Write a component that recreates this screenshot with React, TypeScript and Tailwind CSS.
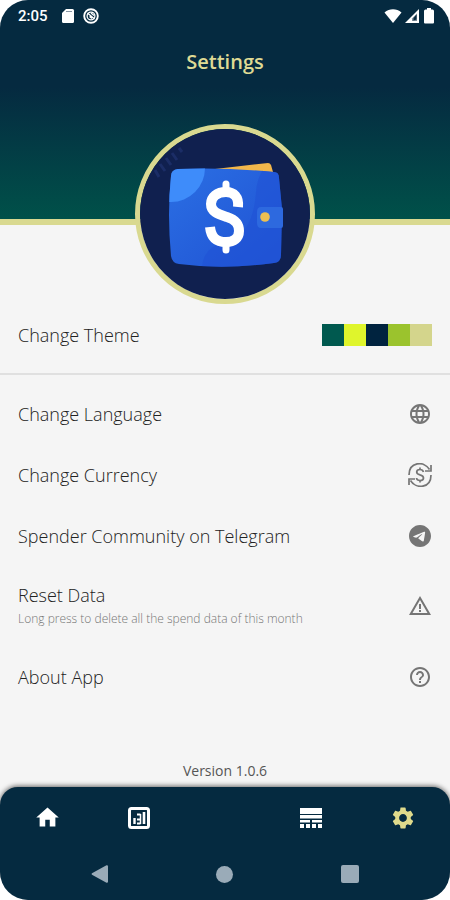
import type { ReactNode } from 'react';
import { MdHelpOutline, MdHome, MdLanguage, MdSettings, MdWarningAmber } from 'react-icons/md';

function StatusBar() {
  return (
    <div className="flex h-8 items-center justify-between pl-[18px] pr-[14px] text-white">
      <div className="flex items-center">
        <span className="w-[43px] font-['Roboto',sans-serif] text-[15px] font-medium leading-5">2:05</span>
        <svg viewBox="0 0 14 16" className="h-4 w-[14px]" fill="currentColor" aria-hidden="true">
          <path d="M5 1h6.500a1.500 1.500 0 0 1 1.500 1.500v11a1.500 1.500 0 0 1-1.500 1.500h-9A1.500 1.500 0 0 1 1 13.500V5z" />
          <path d="M5 3.500h6" stroke="#8795a3" strokeWidth="1.200" />
        </svg>
        <svg viewBox="0 0 16 16" className="ml-2 size-4" fill="none" stroke="currentColor" aria-hidden="true">
          <circle cx="8" cy="8" r="6.800" strokeWidth="1.900" />
          <circle cx="8" cy="8" r="3.900" strokeWidth="1.300" />
          <path d="M4.500 5l7 6M6.500 8.500l2.500 2M8 5l3 2.500" strokeWidth="1.400" />
        </svg>
      </div>
      <div className="flex items-center gap-[2px]">
        <svg viewBox="0 0 18 16" className="h-4 w-[18px]" fill="currentColor" aria-hidden="true">
          <path d="M9 15L.500 4.500C3 2.300 6 1.300 9 1.300s6 1 8.500 3.200z" />
        </svg>
        <svg viewBox="0 0 16 16" className="size-4" aria-hidden="true">
          <path d="M15 1v14H1z" fill="#fff" />
          <path d="M13 5.500v7.500H8V10.500z" fill="#7e8c99" />
          <path d="M12.500 6.500v5l-3 1v-2.500z" fill="#052a40" />
        </svg>
        <svg viewBox="0 0 14 16" className="h-4 w-[14px]" fill="currentColor" aria-hidden="true">
          <path d="M5 0h4v1.500h1.500A1.500 1.500 0 0 1 12 3v11.500a1 1 0 0 1-1 1H3a1 1 0 0 1-1-1V3a1.500 1.500 0 0 1 1.500-1.500H5z" />
        </svg>
      </div>
    </div>
  );
}

function WalletLogo() {
  return (
    <svg viewBox="0 0 170 170" className="size-full" role="img" aria-label="Spender wallet">
      <defs>
        <linearGradient id="wallet" x1="0" y1="0" x2="1" y2="1">
          <stop offset="0" stopColor="#2b70e4" />
          <stop offset="1" stopColor="#1f50d2" />
        </linearGradient>
        <clipPath id="body">
          <path d="M37 39Q83 37 133 42Q138 42 138 48L141 79L140 125Q140 132 133 133Q83 140 38 134Q31 133 30 126Q26 84 30 46Q30 40 37 39Z" />
        </clipPath>
      </defs>
      <rect width="170" height="170" fill="#10204f" />
      <g transform="translate(1 1)">
        <path d="M14 40l4 7M19 34l5 7M25 28l5 7M31 23l5 7M38 18l3 4" stroke="#1b2d66" strokeWidth="3" />
        <path d="M74 39L127 33Q129 33 130 35L132 42H74Z" fill="#f1b64b" />
        <g clipPath="url(#body)">
          <rect x="25" y="35" width="120" height="105" fill="url(#wallet)" />
          <path d="M123 38Q116 48 115 62Q113 92 99 105Q95 111 86 112Q61 116 61 140H145V38Z" fill="#2153d5" opacity="0.650" />
          <circle cx="30" cy="38" r="34" fill="#3e8cfa" />
        </g>
        <path d="M120 77h20q2 0 2 2v17q0 2-2 2H120q-4 0-4-5V82q0-5 4-5z" fill="#2d69df" />
        <circle cx="124" cy="87" r="4.800" fill="#edc052" />
        <path
          d="M97 80C98 70 93 65 85 65C76 65 70 70 70 77C70 85 77 87 86 90C95 93 98 97 98 104C98 111 93 115 85 115C75 115 70 110 69 100"
          transform="translate(0 -3)"
          fill="none"
          stroke="#fff"
          strokeWidth="10"
        />
        <path d="M85 57v-3M85 116v4" stroke="#fff" strokeWidth="7" strokeLinecap="round" />
      </g>
    </svg>
  );
}

function TelegramIcon() {
  return (
    <svg viewBox="0 0 24 24" className="size-6" fill="currentColor" aria-hidden="true">
      <path d="M12 1C5.920 1 1 5.920 1 12s4.920 11 11 11 11-4.920 11-11S18.080 1 12 1zm5.100 7.480c-.17 1.740-.88 5.960-1.240 7.910-.15.830-.46 1.100-.75 1.130-.64.060-1.120-.42-1.740-.83-.97-.64-1.520-1.030-2.450-1.650-1.090-.71-.39-1.110.24-1.750.17-.16 2.980-2.730 3.040-2.960.01-.03.010-.13-.06-.19s-.15-.04-.22-.02c-.10.020-1.640 1.050-4.640 3.070-.44.300-.84.450-1.190.44-.40-.01-1.140-.22-1.710-.41-.69-.22-1.230-.34-1.190-.73.020-.20.300-.40.810-.60 3.210-1.400 5.350-2.320 6.410-2.760 3.060-1.280 3.690-1.500 4.100-1.500.090 0 .300.020.430.130.110.090.140.210.150.300-.01.070.010.260.010.420z" />
    </svg>
  );
}

function CurrencyIcon() {
  return (
    <svg viewBox="0 0 24 24" className="size-6" fill="none" stroke="currentColor" aria-hidden="true">
      <path d="M1 12C1 -1.500 16 -2.500 21.500 6.500" strokeWidth="1.700" />
      <path d="M23 12C23 25.500 8 26.500 2.500 17.500" strokeWidth="1.700" />
      <path d="M23 2v6h-6M1 22v-6h6" strokeWidth="1.700" />
      <path
        d="M15.500 9C15 7.300 13.800 6.500 12 6.500C10 6.500 8.700 7.500 8.700 9C8.700 10.700 10 11.300 12 11.900C14.200 12.500 15.500 13.300 15.500 15C15.500 16.700 14 17.500 12 17.500C10 17.500 8.700 16.600 8.500 15M12 4.500v2M12 17.500v2"
        strokeWidth="1.700"
      />
    </svg>
  );
}

const swatches = ['bg-[#00594f]', 'bg-[#dff52c]', 'bg-[#00233f]', 'bg-[#9bc32d]', 'bg-[#d4d58c]'];

function SettingRow({ label, note, icon }: { label: string; note?: string; icon: ReactNode }) {
  return (
    <button
      type="button"
      className={`flex w-full items-center justify-between px-[18px] text-left ${note ? 'h-20' : 'h-[61px]'}`}
    >
      <span className="flex flex-col">
        <span className="text-lg font-light leading-7 text-[#222]">{label}</span>
        {note && <span className="pb-[2px] text-xs font-light leading-5 text-[#757575]">{note}</span>}
      </span>
      <span className="text-2xl text-[#757575]">{icon}</span>
    </button>
  );
}

function NavButton({ label, active, children }: { label: string; active?: boolean; children: ReactNode }) {
  return (
    <button
      type="button"
      aria-label={label}
      className={`flex size-7 items-center justify-center ${active ? 'text-[#dfda8c]' : 'text-white'}`}
    >
      {children}
    </button>
  );
}

export default function App() {
  return (
    <div className="min-h-screen bg-white font-['Open_Sans','Noto_Sans',sans-serif]">
      <div className="flex min-h-screen flex-col overflow-hidden rounded-[28px] bg-[#f5f5f5]">
        <header className="h-[225px] border-b-[6px] border-[#d9d990] bg-linear-to-b from-[#052a40] from-40% to-[#005149]">
          <StatusBar />
          <h1 className="mt-4 text-center text-xl font-semibold leading-7 text-[#dfda94]">Settings</h1>
        </header>

        <main className="flex grow flex-col">
          <div className="relative -mt-[101px] size-[180px] self-center overflow-hidden rounded-full border-5 border-[#d9d990]">
            <WalletLogo />
          </div>

          <button type="button" className="flex h-[61px] items-center justify-between px-[18px] text-left">
            <span className="text-lg font-light leading-7 text-[#222]">Change Theme</span>
            <span className="flex">
              {swatches.map((color) => (
                <span key={color} className={`h-[22px] w-[22px] ${color}`} />
              ))}
            </span>
          </button>
          <hr className="mb-2 mt-2 border-t-2 border-[#e0e0e0]" />

          <SettingRow label="Change Language" icon={<MdLanguage />} />
          <SettingRow label="Change Currency" icon={<CurrencyIcon />} />
          <SettingRow label="Spender Community on Telegram" icon={<TelegramIcon />} />
          <SettingRow
            label="Reset Data"
            note="Long press to delete all the spend data of this month"
            icon={<MdWarningAmber />}
          />
          <SettingRow label="About App" icon={<MdHelpOutline />} />

          <p className="mb-[6px] mt-auto text-center text-sm leading-5 text-[#555]">Version 1.0.6</p>
        </main>

        <footer className="rounded-t-[18px] bg-[#052a40] shadow-[0_-1px_5px_rgba(0,0,0,0.6)]">
          <nav className="flex h-[61px] items-center justify-between px-[33px]" aria-label="Main">
            <div className="flex gap-16">
              <NavButton label="Home">
                <MdHome className="size-[27px]" />
              </NavButton>
              <NavButton label="Statistics">
                <svg viewBox="0 0 22 22" className="size-[22px]" fill="none" stroke="currentColor" aria-hidden="true">
                  <rect x="1.500" y="1.500" width="19" height="19" rx="2" strokeWidth="3" />
                  <path d="M6.500 11v6" strokeWidth="2.400" />
                  <path d="M9 7.500h3.500M9 12.500h3.500M9 16.500h3.500" strokeWidth="2" />
                  <path d="M12.500 7v10" strokeWidth="1.500" />
                  <path d="M16 5v12" strokeWidth="2.600" />
                </svg>
              </NavButton>
            </div>
            <div className="flex gap-16">
              <NavButton label="Transactions">
                <svg viewBox="0 0 22 20" className="h-5 w-[22px]" fill="currentColor" aria-hidden="true">
                  <path d="M0 0h22v6H0zM0 7h22v3.500H0zM0 12h10v2.500H0zM12 12h10v2.500H12zM0 16h4v4H0zM6 16h4v4H6zM12 16h4v4h-4zM18 16h4v4h-4z" />
                </svg>
              </NavButton>
              <NavButton label="Settings" active>
                <MdSettings className="size-[26px]" />
              </NavButton>
            </div>
          </nav>
          <div className="grid h-[52px] grid-cols-3 items-center justify-items-center px-[37px] text-[#9aabb8]">
            <button type="button" aria-label="Back">
              <svg viewBox="0 0 18 18" className="size-[18px]" fill="currentColor" aria-hidden="true">
                <path d="M1 8.300L15.500.300Q17 0 17 1.500v15Q17 18 15.500 17.700L1 9.700Q0 9 1 8.300z" />
              </svg>
            </button>
            <button type="button" aria-label="Home screen" className="size-[17px] rounded-full bg-current" />
            <button type="button" aria-label="Recent apps" className="size-[18px] rounded-[2px] bg-current" />
          </div>
        </footer>
      </div>
    </div>
  );
}
